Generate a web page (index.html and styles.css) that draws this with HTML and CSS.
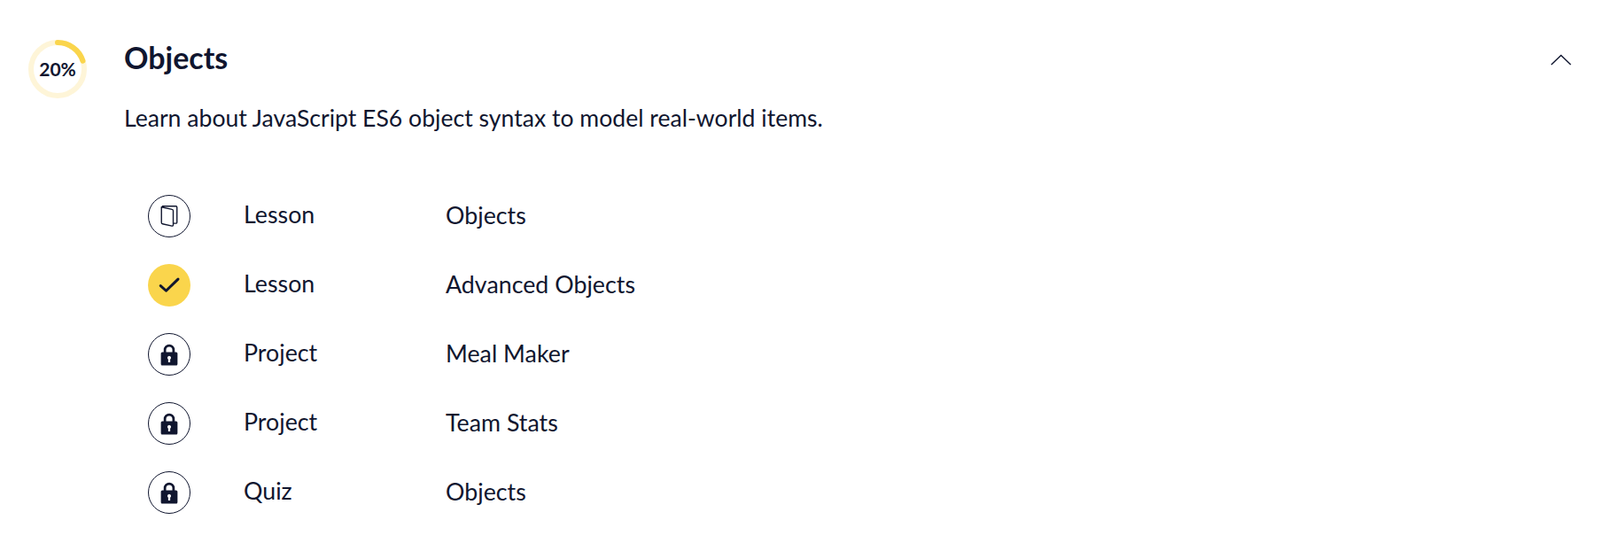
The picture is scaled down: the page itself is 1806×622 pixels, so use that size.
FILE: index.html
```html
<!DOCTYPE html>
<html lang="en">
  <head>
    <meta charset="UTF-8" />
    <meta name="viewport" content="width=device-width, initial-scale=1.0" />
    <title>Objects</title>
    <link rel="stylesheet" href="styles.css">
  </head>
  <body>
    <section class="module">
      <div class="progress">
        <svg class="ring" viewBox="0 0 66 66" width="66" height="66">
          <circle cx="33" cy="33" r="30" fill="none" stroke="#fef5d8" stroke-width="6" />
          <path d="M33 3A30 30 0 0 1 61.5 23.7" fill="none" stroke="#fad54c" stroke-width="6" stroke-linecap="round" />
        </svg>
        <span class="percent">20%</span>
      </div>
      <div class="content">
        <div class="heading">
          <h2>Objects</h2>
          <svg class="chevron" viewBox="0 0 24 13" width="24" height="13">
            <path d="M1 12L12 1.5L23 12" fill="none" stroke="#10162f" stroke-width="1.4" />
          </svg>
        </div>
        <p class="summary">Learn about JavaScript ES6 object syntax to model real-world items.</p>
        <ul class="items">
          <li class="item">
            <span class="badge">
              <svg viewBox="0 0 24 24" width="30" height="30">
                <path d="M5 3.8L14.6 5.9c.6.1 1 .6 1 1.2V20c0 .6-.5 1-1.1.9L6 19c-.6-.1-1-.6-1-1.2V3.8zM5.5 3H18c.6 0 1 .4 1 1v13.5c0 .6-.4 1-1 1h-2.4" fill="none" stroke="#10162f" stroke-width="1.1" stroke-linejoin="round" />
              </svg>
            </span>
            <span class="kind">Lesson</span>
            <span class="title">Objects</span>
          </li>
          <li class="item">
            <span class="badge done">
              <svg viewBox="0 0 24 24" width="30" height="30">
                <path d="M4.2 12.5L9.2 17L20 6.5" fill="none" stroke="#10162f" stroke-width="2.4" stroke-linecap="round" stroke-linejoin="round" />
              </svg>
            </span>
            <span class="kind">Lesson</span>
            <span class="title">Advanced Objects</span>
          </li>
          <li class="item">
            <span class="badge">
              <svg viewBox="0 0 24 24" width="30" height="30"><use href="#lock" /></svg>
            </span>
            <span class="kind">Project</span>
            <span class="title">Meal Maker</span>
          </li>
          <li class="item">
            <span class="badge">
              <svg viewBox="0 0 24 24" width="30" height="30"><use href="#lock" /></svg>
            </span>
            <span class="kind">Project</span>
            <span class="title">Team Stats</span>
          </li>
          <li class="item">
            <span class="badge">
              <svg viewBox="0 0 24 24" width="30" height="30"><use href="#lock" /></svg>
            </span>
            <span class="kind">Quiz</span>
            <span class="title">Objects</span>
          </li>
        </ul>
      </div>
    </section>

    <svg class="defs" width="0" height="0">
      <symbol id="lock" viewBox="0 0 24 24">
        <path fill="#10162f" fill-rule="evenodd" d="M7 10V8a5 5 0 0 1 10 0v2h1.2c.7 0 1.3.6 1.3 1.3v9.4c0 .7-.6 1.3-1.3 1.3H5.8c-.7 0-1.3-.6-1.3-1.3v-9.4c0-.7.6-1.3 1.3-1.3H7zm2.2 0h5.6V8a2.8 2.8 0 0 0-5.6 0v2zM12 13.4a1.7 1.7 0 0 0-.9 3.1v2.6h1.8v-2.6a1.7 1.7 0 0 0-.9-3.1z" />
      </symbol>
    </svg>
  </body>
</html>
```

FILE: styles.css
```css
body {
  margin: 0;
  font-family: "Lato", "Open Sans", sans-serif;
  color: #10162f;
  background-color: white;
}

.module {
  display: flex;
  padding: 45px 32px 0 32px;
}

.progress {
  position: relative;
  width: 66px;
  height: 66px;
  flex: none;
  margin-right: 42px;
}
.ring {
  display: block;
}
.percent {
  position: absolute;
  inset: 0;
  display: flex;
  align-items: center;
  justify-content: center;
  padding-bottom: 2px;
  box-sizing: border-box;
  font-size: 21px;
  font-weight: 700;
}

.content {
  flex: 1;
}

.heading {
  display: flex;
  align-items: center;
  justify-content: space-between;
  height: 42px;
}
h2 {
  margin: 0 0 2px 0;
  font-size: 34px;
  font-weight: 700;
  line-height: 42px;
}
.chevron {
  display: block;
  margin-top: 2px;
}

.summary {
  margin: 26px 0 0 0;
  font-size: 26.6px;
  line-height: 40px;
}

.items {
  list-style: none;
  margin: 52px 0 0 0;
  padding: 0 0 0 27px;
}
.item {
  display: flex;
  align-items: center;
  height: 78px;
  font-size: 26.8px;
}

.badge {
  display: flex;
  align-items: center;
  justify-content: center;
  width: 48px;
  height: 48px;
  flex: none;
  box-sizing: border-box;
  border: 1px solid #10162f;
  border-radius: 50%;
  margin-right: 60px;
}
.badge.done {
  background-color: #fad54c;
  border: none;
}

.kind {
  width: 228px;
  padding-bottom: 5px;
}
.title {
  padding-bottom: 2px;
}

.defs {
  position: absolute;
}
```
